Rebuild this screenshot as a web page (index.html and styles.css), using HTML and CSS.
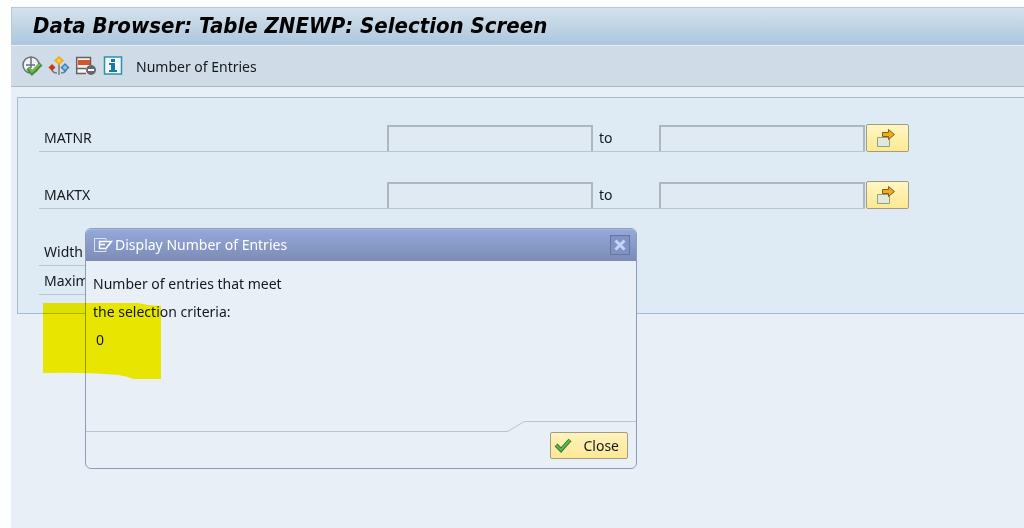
FILE: index.html
```
<!DOCTYPE html>
<html lang="en">
<head>
	<meta charset="utf-8">
	<meta name="viewport" content="width=device-width, initial-scale=1">
	<title>Data Browser</title>
	<link rel="stylesheet" href="styles.css">
</head>
<body>
	<div class="window">
		<!-- title bar -->
		<h1 class="titlebar">Data Browser: Table ZNEWP: Selection Screen</h1>
		<!-- application toolbar -->
		<div class="toolbar">
			<button class="tool" type="button" aria-label="Execute">
				<svg width="20" height="20" viewBox="0 0 20 20" fill="none">
					<circle cx="9" cy="9" r="8" fill="#eef2f4" stroke="#6b6f73" stroke-width="1.5"/>
					<path d="M9 1v11M4 9h9" stroke="#6b6f73" stroke-width="1.5"/>
					<path d="M6 12l4 5 9-9" stroke="#3f8a32" stroke-width="4"/>
					<path d="M7 12l3 4 8-8" stroke="#74b84f" stroke-width="2"/>
				</svg>
			</button>
			<button class="tool" type="button" aria-label="Get variant">
				<svg width="20" height="20" viewBox="0 0 20 20" fill="none">
					<path d="M10 6v13M3 14q1 3 5 3M17 14q-1 3-5 3" stroke="#777c80" stroke-width="1.5"/>
					<path d="M10 0l5 4.500-5 4.500-5-4.500z" fill="#f0a818"/>
					<circle cx="10" cy="4.500" r="2" fill="#ffd050"/>
					<path d="M3 8l3.500 3.500L3 15l-3.500-3.500z" fill="#c63a1c"/>
					<path d="M16 7l4.500 4.500L16 16l-4.500-4.500z" fill="#3b7eb8"/>
					<circle cx="16" cy="11.500" r="2" fill="#8fc3e6"/>
				</svg>
			</button>
			<button class="tool" type="button" aria-label="Dynamic selections">
				<svg width="20" height="20" viewBox="0 0 20 20" fill="none">
					<path d="M.7 1h14v17H.7z" fill="#f7f5f3"/>
					<path d="M0 1.500h15M.7 1v17M14.500 1v8M0 12.500h10M0 17.500h10" stroke="#64605e" stroke-width="1.5"/>
					<path d="M2 4h12v5H2z" fill="#d2562c"/>
					<circle cx="15" cy="14" r="5" fill="#64686c"/>
					<path d="M12 14h6" stroke="#fff" stroke-width="2"/>
				</svg>
			</button>
			<button class="tool" type="button" aria-label="Information">
				<svg width="20" height="20" viewBox="0 0 20 20">
					<path d="M1.500 1h17v17h-17z" fill="#f4f9fc" stroke="#2d8fb5" stroke-width="1.5"/>
					<path d="M8 3h4v3H8zM6 7h6v7h2v2H6v-2h2V9H6z" fill="#167aa5"/>
				</svg>
			</button>
			<button class="tool tool-text" type="button">Number of Entries</button>
		</div>
		<!-- selection criteria -->
		<form class="criteria">
			<div class="row">
				<label class="name" for="matnr-low">MATNR</label>
				<input class="field" id="matnr-low" type="text">
				<label class="to" for="matnr-high">to</label>
				<input class="field" id="matnr-high" type="text">
				<button class="more" type="button" aria-label="Multiple selection for MATNR">
					<svg width="20" height="20" viewBox="0 0 20 20">
						<path d="M1.500 9.500h12v9h-12z" fill="#e3e8df" stroke="#8ea57c"/>
						<path d="M6.500 4.500h6v-3l6 5-6 5v-3h-6z" fill="#f2ab18" stroke="#8a5a17"/>
					</svg>
				</button>
			</div>
			<div class="row">
				<label class="name" for="maktx-low">MAKTX</label>
				<input class="field" id="maktx-low" type="text">
				<label class="to" for="maktx-high">to</label>
				<input class="field" id="maktx-high" type="text">
				<button class="more" type="button" aria-label="Multiple selection for MAKTX">
					<svg width="20" height="20" viewBox="0 0 20 20">
						<path d="M1.500 9.500h12v9h-12z" fill="#e3e8df" stroke="#8ea57c"/>
						<path d="M6.500 4.500h6v-3l6 5-6 5v-3h-6z" fill="#f2ab18" stroke="#8a5a17"/>
					</svg>
				</button>
			</div>
			<div class="options">
				<div class="row short"><span class="name">Width</span></div>
				<div class="row short"><span class="name">Maxim</span></div>
			</div>
		</form>
	</div>

	<!-- popup with the hit count -->
	<div class="dialog" role="dialog" aria-labelledby="dialog-title">
		<div class="dialog-head">
			<svg width="20" height="16" viewBox="0 0 20 16" fill="none" stroke="#fff">
				<path d="M13 1.500H1.500v13H13v-2M13 1.500v2" stroke="#dbe4f7"/>
				<path d="M6.500 4v8M6 4.500h12.500l-3 4M6 7.500h6M6 11.500h7l3-4" stroke-width="1.5"/>
			</svg>
			<h2 class="dialog-title" id="dialog-title">Display Number of Entries</h2>
			<button class="x" type="button" aria-label="Close window">
				<svg width="12" height="12" viewBox="0 0 12 12">
					<path d="M1.500 1.500l9 9M10.500 1.500l-9 9" stroke="#c3d5fb" stroke-width="3"/>
				</svg>
			</button>
		</div>
		<div class="dialog-body">
			<p>Number of entries that meet</p>
			<p>the selection criteria:</p>
			<p class="count">0</p>
		</div>
		<div class="dialog-foot">
			<div class="edge">
				<div class="edge-low"></div>
				<svg width="20" height="11" viewBox="0 0 20 11" fill="none">
					<path d="M0 10.500q3 0 5-2l10-6q2-2 5-2" stroke="#b9c4ce"/>
				</svg>
				<div class="edge-high"></div>
			</div>
			<button class="close" type="button">
				<svg width="18" height="16" viewBox="0 0 18 16" fill="none">
					<path d="M2 7l5 5 9-10" stroke="#347c32" stroke-width="4"/>
					<path d="M2 7l5 5 9-10" stroke="#63b055" stroke-width="2"/>
				</svg>
				Close
			</button>
		</div>
	</div>

	<!-- marker stroke over the result -->
	<svg class="marker" width="118" height="76" viewBox="0 0 118 76">
		<path d="M0 0h95q12 3 23 3v73H91q-8-3-16-4Q40 69 0 70z" fill="#fff600"/>
	</svg>
</body>
</html>
```

FILE: styles.css
```
* {
	box-sizing: border-box;
}
body {
	margin: 0;
	padding: 7px 0 0 11px;
	background-color: #fdfefe;
	font-family: "Noto Sans", Tahoma, sans-serif;
	font-size: 14px;
	color: #14191d;
	overflow: hidden;
}
button {
	font: inherit;
	color: inherit;
	cursor: pointer;
}
svg {
	display: block;
	flex: none;
	overflow: visible;
}
.window {
	min-height: calc(100vh - 7px);
	background-color: #e8eff6;
}
/* title bar */
.titlebar {
	margin: 0;
	padding-left: 21px;
	border: 1px solid #b5c8d7;
	border-right: 0;
	background-image: linear-gradient(#d5e2ec, #bdd2e3 60%, #abc7df);
	font-family: "DejaVu Sans Condensed", Tahoma, sans-serif;
	font-size: 22px;
	line-height: 36px;
	font-style: italic;
	white-space: nowrap;
	color: #000;
}
/* toolbar */
.toolbar {
	display: flex;
	align-items: center;
	gap: 7px;
	height: 42px;
	padding-left: 11px;
	border-top: 1px solid #e6eef4;
	border-bottom: 1px solid #a9bac8;
	background-color: #cfdce7;
}
.tool {
	padding: 0;
	border: 0;
	background: none;
}
.tool-text {
	margin-left: 6px;
}
/* selection block */
.criteria {
	margin: 10px 0 0 6px;
	padding: 26px 0 18px 21px;
	border: 1px solid #a3bacf;
	border-right: 0;
	background-color: #deeaf4;
}
.row {
	display: flex;
	align-items: flex-end;
	width: 826px;
	height: 28px;
	margin-bottom: 29px;
	border-bottom: 1px solid #b9c6d1;
}
.name {
	flex: 1;
	padding-left: 5px;
	line-height: 26px;
}
.field {
	width: 206px;
	height: 26px;
	padding: 0 4px;
	border: 2px solid #adb7c2;
	border-width: 2px 2px 0;
	background-color: #dfeaf3;
	font: inherit;
	outline: 0;
}
.to {
	width: 66px;
	padding-left: 6px;
	line-height: 26px;
}
/* the button hangs past the end of the row line */
.more {
	display: flex;
	align-items: center;
	width: 43px;
	height: 28px;
	margin: 0 -44px -1px 1px;
	padding: 0 0 0 9px;
	border: 1px solid #a39c84;
	border-radius: 2px;
	background-image: linear-gradient(#fff6c4, #fde992);
}
.options .row {
	margin-bottom: 0;
}
.options .row + .row {
	height: 29px;
}
.short {
	width: 350px;
}
/* popup */
.dialog {
	position: absolute;
	left: 85px;
	top: 228px;
	display: flex;
	flex-direction: column;
	width: 552px;
	height: 241px;
	border: 1px solid #8d9cb8;
	border-radius: 6px;
	background-color: #e8eff6;
	overflow: hidden;
}
.dialog-head {
	display: flex;
	align-items: center;
	height: 32px;
	padding: 0 6px 2px 7px;
	border-top: 1px solid #a9b9e0;
	background-image: linear-gradient(#94a8da, #7c8cb5);
	color: #fff;
}
.dialog-title {
	flex: 1;
	margin: 0 0 0 2px;
	font-size: 14px;
	font-weight: normal;
}
.x {
	display: flex;
	align-items: center;
	justify-content: center;
	width: 20px;
	height: 20px;
	padding: 0;
	border: 1px solid #65779f;
	background-color: #8093c2;
}
.dialog-body {
	flex: 1;
	padding: 9px 7px 0;
}
.dialog-body p {
	margin: 0;
	line-height: 28px;
}
.dialog-body .count {
	padding-left: 3px;
}
.dialog-foot {
	display: flex;
	flex-direction: column;
	align-items: flex-end;
	padding-bottom: 9px;
}
.edge {
	display: flex;
	width: 100%;
	height: 11px;
}
.edge-low {
	flex: 1;
	border-bottom: 1px solid #b9c4ce;
}
.edge-high {
	width: 110px;
	border-top: 1px solid #b9c4ce;
}
.close {
	display: flex;
	align-items: center;
	justify-content: space-between;
	width: 78px;
	height: 27px;
	margin-right: 8px;
	padding: 0 8px 0 3px;
	border: 1px solid #a39c84;
	border-radius: 2px;
	background-image: linear-gradient(#fff3bd, #fde894);
}
/* highlighter */
.marker {
	position: absolute;
	left: 43px;
	top: 303px;
	mix-blend-mode: multiply;
	pointer-events: none;
}
```
